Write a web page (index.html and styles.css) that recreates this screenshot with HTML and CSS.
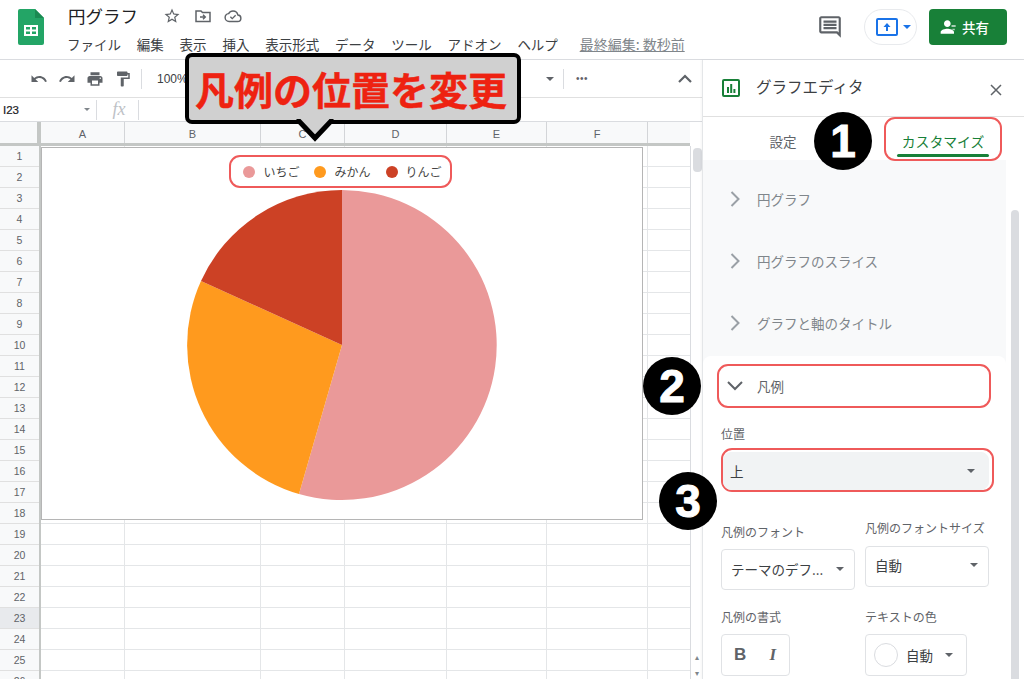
FILE: index.html
```html
<!DOCTYPE html>
<html lang="ja">
<head>
<meta charset="utf-8">
<title>円グラフ</title>
<link rel="stylesheet" href="styles.css">
</head>
<body>
<div class="page">
  <header class="topbar">
    <svg class="logo" viewBox="0 0 26 36" width="26" height="36"><path d="M2 0h15l9 9v25a2 2 0 0 1-2 2H2a2 2 0 0 1-2-2V2a2 2 0 0 1 2-2z" fill="#23a566"/><path d="M17 0l9 9h-9z" fill="#1a8a52"/><path d="M6 16h14v11H6z" fill="#fff"/><path d="M8 18h4v2.500H8zM14 18h4v2.500h-4zM8 22.500h4V25H8zM14 22.500h4V25h-4z" fill="#23a566"/></svg>
    <div class="doc">
      <div class="doc-title">
        <span class="title">円グラフ</span>
        <svg class="ic star" viewBox="0 0 24 24" width="18" height="18"><path fill="#5f6368" d="M22 9.240l-7.190-.620L12 2 9.190 8.630 2 9.240l5.460 4.730L5.820 21 12 17.270 18.180 21l-1.630-7.030L22 9.240zM12 15.400l-3.760 2.270 1-4.280-3.320-2.880 4.380-.380L12 6.100l1.710 4.040 4.380.380-3.320 2.880 1 4.280L12 15.400z"/></svg>
        <svg class="ic" viewBox="0 0 18 18" width="18" height="18"><path d="M2 4h5l1.500 1.500H16V14.500H2z" fill="none" stroke="#5f6368" stroke-width="1.500"/><path d="M6 10h5M9 7.800l2.300 2.200L9 12.200" fill="none" stroke="#5f6368" stroke-width="1.400"/></svg>
        <svg class="ic" viewBox="0 0 24 24" width="18" height="18"><path d="M19.350 10.040C18.670 6.590 15.640 4 12 4 9.110 4 6.600 5.640 5.350 8.040 2.340 8.360 0 10.910 0 14c0 3.310 2.690 6 6 6h13c2.760 0 5-2.240 5-5 0-2.640-2.050-4.780-4.650-4.960z" transform="translate(1.500 1.800) scale(.875)" fill="none" stroke="#5f6368" stroke-width="2.200"/><path d="M8.500 13l2.500 2.500 4.500-4.500" fill="none" stroke="#5f6368" stroke-width="1.800"/></svg>
      </div>
      <nav class="menu">
        <span>ファイル</span><span>編集</span><span>表示</span><span>挿入</span><span>表示形式</span><span>データ</span><span>ツール</span><span>アドオン</span><span>ヘルプ</span>
        <a class="saved">最終編集: 数秒前</a>
      </nav>
    </div>
    <div class="actions">
      <svg class="comment" viewBox="0 0 24 24" width="26" height="26"><path fill="#5f6368" d="M21.990 4c0-1.100-.890-2-1.990-2H4c-1.100 0-2 .900-2 2v12c0 1.100.900 2 2 2h14l4 4-.010-18zM20 4v13.170L18.830 16H4V4h16zM6 12h12v2H6zm0-3h12v2H6zm0-3h12v2H6z"/></svg>
      <div class="present">
        <svg viewBox="0 0 22 18" width="22" height="18"><rect x="1" y="1" width="20" height="16" rx="1" fill="none" stroke="#1a73e8" stroke-width="2"/><path d="M11 5l3.500 4H12v4h-2V9H7.500z" fill="#1a73e8"/></svg>
        <i class="caret blue"></i>
      </div>
      <button class="share">
        <svg viewBox="0 0 24 24" width="20" height="20"><path fill="#fff" d="M10 12c2.210 0 4-1.790 4-4s-1.790-4-4-4-4 1.790-4 4 1.790 4 4 4zm0 2c-2.670 0-8 1.340-8 4v2h16v-2c0-2.660-5.330-4-8-4z"/><path fill="#a8cdb5" d="M15 9.500h5v2.500h-5zM16 14h3v2h-3z"/></svg>
        <span>共有</span>
      </button>
    </div>
  </header>

  <div class="workspace">
    <section class="sheet">
      <div class="toolbar">
        <svg viewBox="0 0 24 24" width="18" height="18"><path fill="#5f6368" d="M12.500 8c-2.650 0-5.050.990-6.900 2.600L2 7v9h9l-3.620-3.620c1.390-1.160 3.160-1.880 5.120-1.880 3.540 0 6.550 2.310 7.600 5.500l2.370-.780C21.080 11.030 17.150 8 12.500 8z"/></svg>
        <svg viewBox="0 0 24 24" width="18" height="18"><path fill="#5f6368" d="M18.400 10.600C16.550 8.990 14.150 8 11.500 8c-4.650 0-8.580 3.030-9.960 7.220L3.900 16c1.050-3.190 4.050-5.500 7.600-5.500 1.950 0 3.730.720 5.120 1.880L13 16h9V7l-3.600 3.600z"/></svg>
        <svg viewBox="0 0 24 24" width="18" height="18"><path fill="#5f6368" d="M19 8H5c-1.660 0-3 1.340-3 3v6h4v4h12v-4h4v-6c0-1.660-1.340-3-3-3zm-3 11H8v-5h8v5zm3-7c-.550 0-1-.450-1-1s.450-1 1-1 1 .450 1 1-.450 1-1 1zm-1-9H6v4h12V3z"/></svg>
        <svg viewBox="0 0 24 24" width="18" height="18"><path fill="#5f6368" d="M18 4V3c0-.550-.450-1-1-1H5c-.550 0-1 .450-1 1v4c0 .550.450 1 1 1h12c.550 0 1-.450 1-1V6h1v4H9v11c0 .550.450 1 1 1h2c.550 0 1-.450 1-1v-9h8V4h-3z"/></svg>
        <i class="sep first"></i>
        <span class="zoom-val">100%</span>
        <div class="tb-right">
          <i class="caret"></i>
          <i class="sep"></i>
          <span class="dots">•••</span>
          <svg class="collapse" viewBox="0 0 14 9" width="14" height="9"><path d="M1 8l6-6 6 6" fill="none" stroke="#5f6368" stroke-width="2.200"/></svg>
        </div>
      </div>
      <div class="formula">
        <span class="cellref">I23</span>
        <i class="caret small"></i>
        <i class="sep"></i>
        <span class="fx">fx</span>
        <i class="sep"></i>
      </div>
      <div class="grid-head">
        <div class="corner"></div>
        <div class="col a">A</div><div class="col b">B</div><div class="col c">C</div><div class="col d">D</div><div class="col e">E</div><div class="col f">F</div><div class="col g"></div>
      </div>
      <div class="grid-body">
        <div class="rownums">
          <div>1</div><div>2</div><div>3</div><div>4</div><div>5</div><div>6</div><div>7</div><div>8</div><div>9</div><div>10</div><div>11</div><div>12</div><div>13</div><div>14</div><div>15</div><div>16</div><div>17</div><div>18</div><div>19</div><div>20</div><div>21</div><div>22</div><div class="on">23</div><div>24</div><div>25</div><div>26</div>
        </div>
        <div class="cells">
          <div class="a"></div><div class="b"></div><div class="c"></div><div class="d"></div><div class="e"></div><div class="f"></div><div class="g"></div>
          <div class="chart">
            <div class="legend">
              <span class="key"><i class="dot pink"></i>いちご</span>
              <span class="key"><i class="dot orange"></i>みかん</span>
              <span class="key"><i class="dot red"></i>りんご</span>
            </div>
            <svg class="pie" viewBox="0 0 312 312" width="312" height="312">
              <path d="M156 156L156 1A155 155 0 1 1 113 305Z" fill="#ea9999"/>
              <path d="M156 156L113 305A155 155 0 0 1 15 92Z" fill="#ff9a1e"/>
              <path d="M156 156L15 92A155 155 0 0 1 156 1Z" fill="#cc4125"/>
            </svg>
          </div>
        </div>
        <div class="vscroll"><i class="thumb"></i><span class="arrows">▴<br>▾</span></div>
      </div>
    </section>

    <aside class="panel">
      <div class="panel-head">
        <svg viewBox="0 0 18 18" width="18" height="18"><rect x="1" y="1" width="16" height="16" rx="1" fill="none" stroke="#188038" stroke-width="2"/><path d="M5 8h2v6H5zM8.200 5h2v9h-2zM11.400 10h2v4h-2z" fill="#188038"/></svg>
        <span class="panel-title">グラフエディタ</span>
        <svg class="close" viewBox="0 0 12 12" width="12" height="12"><path d="M1 1l10 10M11 1L1 11" stroke="#5f6368" stroke-width="1.500" fill="none"/></svg>
      </div>
      <div class="tabs">
        <span class="tab">設定</span>
        <span class="tab active">カスタマイズ<i></i></span>
      </div>
      <div class="accordion">
        <div class="acc-row"><svg viewBox="0 0 10 16" width="10" height="16"><path d="M1.500 1l7 7-7 7" fill="none" stroke="#9aa0a6" stroke-width="2"/></svg><span>円グラフ</span></div>
        <div class="acc-row"><svg viewBox="0 0 10 16" width="10" height="16"><path d="M1.500 1l7 7-7 7" fill="none" stroke="#9aa0a6" stroke-width="2"/></svg><span>円グラフのスライス</span></div>
        <div class="acc-row"><svg viewBox="0 0 10 16" width="10" height="16"><path d="M1.500 1l7 7-7 7" fill="none" stroke="#9aa0a6" stroke-width="2"/></svg><span>グラフと軸のタイトル</span></div>
        <div class="card">
          <div class="card-head"><svg viewBox="0 0 16 10" width="16" height="10"><path d="M1 1l7 7 7-7" fill="none" stroke="#5f6368" stroke-width="2"/></svg><span>凡例</span></div>
          <div class="form">
            <label class="lbl pos">位置</label>
            <div class="hl"><div class="select filled"><span>上</span><i class="caret"></i></div></div>
            <div class="two font-row">
              <div class="fcol shifted">
                <label class="lbl">凡例のフォント</label>
                <div class="select font"><span>テーマのデフ...</span><i class="caret"></i></div>
              </div>
              <div class="fcol">
                <label class="lbl">凡例のフォントサイズ</label>
                <div class="select size"><span>自動</span><i class="caret"></i></div>
              </div>
            </div>
            <div class="two style-row">
              <div class="fcol">
                <label class="lbl">凡例の書式</label>
                <div class="select fmt"><b>B</b><em>I</em></div>
              </div>
              <div class="fcol">
                <label class="lbl">テキストの色</label>
                <div class="select color"><i class="swatch"></i><span>自動</span><i class="caret"></i></div>
              </div>
            </div>
          </div>
        </div>
      </div>
      <i class="panel-scroll"></i>
    </aside>
  </div>

  <div class="callout">
    <span>凡例の位置を変更</span>
    <svg class="tail" viewBox="0 0 40 24" width="40" height="24"><path d="M2 0L20 19 38 0" fill="#d0d0d0" stroke="#000" stroke-width="5" stroke-linejoin="miter"/></svg>
  </div>
  <span class="badge one">1</span>
  <span class="badge two-b">2</span>
  <span class="badge three">3</span>
</div>
</body>
</html>
```

FILE: styles.css
```css
* { box-sizing: border-box; }
html, body { margin: 0; padding: 0; background: #fff; }
body { font-family: "Noto Sans CJK JP", "Liberation Sans", sans-serif; color: #3c4043; }
i, em { font-style: normal; }
svg { display: block; flex: none; }
.page { position: relative; width: 1024px; height: 679px; overflow: hidden; }

/* top bar */
.topbar { height: 60px; display: flex; padding-left: 18px; border-bottom: 1px solid #dadce0; }
.logo { margin-top: 9px; }
.doc { margin-left: 24px; padding-top: 1px; }
.doc-title { display: flex; align-items: center; height: 30px; }
.title { font-size: 17.500px; color: #202124; width: 95px; line-height: 26px; }
.doc-title .ic { margin-right: 12.500px; }
.menu { display: flex; align-items: center; gap: 15.800px; margin-left: -1px; font-size: 13.500px; color: #3c4043; height: 26px; white-space: nowrap; }
.saved { margin-left: 6px; font-size: 14px; color: #80868b; text-decoration: underline; }
.actions { margin-left: auto; display: flex; align-items: center; padding-right: 17px; height: 54px; }
.comment { margin-right: 21px; }
.present { width: 53px; height: 36px; border: 1px solid #e8eaed; border-radius: 18px; display: flex; align-items: center; padding-left: 11px; gap: 5px; margin-right: 12px; }
.share { width: 78px; height: 36px; border: 0; border-radius: 4px; background: #188038; color: #fff; font: 500 13.500px "Noto Sans CJK JP", sans-serif; display: flex; align-items: center; justify-content: center; gap: 3px; padding: 0 8px 0 0; }

.caret { display: block; flex: none; width: 0; height: 0; border-left: 4.500px solid transparent; border-right: 4.500px solid transparent; border-top: 4.500px solid #5f6368; }
.caret.blue { border-top-color: #1a73e8; }
.caret.small { border-left-width: 3.500px; border-right-width: 3.500px; border-top-width: 3.500px; border-top-color: #80868b; }
.sep { display: block; width: 1px; height: 20px; background: #dadce0; flex: none; }

/* workspace */
.workspace { display: flex; height: 619px; }
.sheet { width: 702px; flex: none; }
.toolbar { height: 38px; display: flex; align-items: center; gap: 10px; padding-left: 30px; border-bottom: 1px solid #e0e0e0; }
.sep.first { margin-left: -1px; }
.zoom-val { margin-left: 5px; font: 12px "Liberation Sans", sans-serif; color: #3c4043; }
.tb-right { margin-left: auto; display: flex; align-items: center; gap: 9px; padding-right: 10px; }
.dots { font: 10px "Liberation Sans", sans-serif; letter-spacing: .5px; color: #5f6368; margin-left: 3px; margin-right: 81px; }
.formula { height: 24px; display: flex; align-items: center; border-bottom: 1px solid #dadce0; padding-left: 3px; }
.cellref { font: 11.500px "Liberation Sans", sans-serif; color: #202124; width: 81px; -webkit-text-stroke: .2px #202124; }
.formula .sep { margin-left: 6px; }
.fx { font: italic 18px "Liberation Serif", serif; color: #bdc1c6; width: 40px; text-align: center; margin-left: 2px; margin-right: -7px; }

.grid-head { height: 24px; display: flex; background: #f8f9fa; border-bottom: 3px solid #c4c7c5; width: 690px; }
.corner { width: 41px; border-right: 4px solid #c4c7c5; }
.col { display: flex; align-items: center; justify-content: center; padding-top: 2px; font: 11px "Liberation Sans", sans-serif; color: #5f6368; border-right: 1px solid #d3d5d8; }
.a { width: 84px; } .b { width: 136px; } .c { width: 84px; } .d { width: 102px; } .e { width: 100px; } .f { width: 101px; } .g { width: 42px; }
.col.g { border-right: 0; }
.grid-body { display: flex; height: 533px; overflow: hidden; position: relative; }
.rownums { width: 41px; flex: none; border-right: 2px solid #c4c7c5; background: #f8f9fa; }
.rownums div { height: 21px; border-bottom: 1px solid #e0e0e0; text-align: center; font: 10.500px/20px "Liberation Sans", sans-serif; color: #5f6368; }
.rownums .on { background: #e8eaed; }
.cells { width: 649px; flex: none; position: relative; display: flex; background: repeating-linear-gradient(to bottom, #fff 0, #fff 20px, #e4e6e8 20px, #e4e6e8 21px); }
.cells > div { border-right: 1px solid #e4e6e8; }
.cells > .g { border-right: 0; }
.vscroll { flex: 1; border-left: 1px solid #dadce0; position: relative; }
.thumb { position: absolute; left: 2px; top: 2px; width: 9px; height: 24px; border-radius: 4px; background: #dadce0; }
.arrows { position: absolute; left: 0; right: 0; top: 504px; text-align: center; font: 8px/16px "Liberation Sans", sans-serif; color: #80868b; }

/* chart (floats over the cells) */
.cells > .chart { position: absolute; left: 0; top: 1px; width: 602px; height: 373px; background: #fff; border: 1px solid #b5b5b5; display: flex; flex-direction: column; align-items: center; }
.legend { width: 223px; height: 33px; margin: 7px 3px 0 0; padding-left: 4px; border: 2px solid #ef5a5a; border-radius: 11px; display: flex; align-items: center; justify-content: center; gap: 15px; font-size: 12px; color: #444; flex: none; }
.key { display: flex; align-items: center; gap: 8px; }
.dot { width: 12px; height: 12px; border-radius: 50%; }
.pink { background: #ea9999; } .orange { background: #ff9a1e; } .red { background: #cc4125; }
.pie { margin-top: 1px; }

/* panel */
.panel { width: 322px; flex: none; border-left: 1px solid #e4e6e8; position: relative; box-shadow: -1px 0 2px rgba(0,0,0,.04); background: #fff; }
.panel-head { height: 57px; display: flex; align-items: center; padding: 0 22px 0 19px; border-bottom: 1px solid #e0e0e0; }
.panel-title { margin-left: 16px; font-size: 15.500px; color: #3c4043; margin-top: -4px; }
.close { margin-left: auto; margin-top: 3px; }
.tabs { height: 43px; display: flex; }
.tab { width: 160px; display: flex; align-items: center; justify-content: center; font-size: 13.500px; color: #5f6368; padding-top: 4px; }
.tab.active { width: 118px; height: 44px; margin-left: 21px; position: relative; z-index: 1; border: 2px solid #ef5a5a; border-radius: 11px; color: #188038; font-size: 13.800px; }
.tab.active i { position: absolute; left: 11px; right: 11px; bottom: 2px; height: 3px; border-radius: 2px; background: #188038; }
.accordion { width: 303px; background: #f8f9fa; padding-top: 8px; height: 520px; }
.acc-row { height: 62px; display: flex; align-items: center; padding-left: 27px; font-size: 13.500px; color: #80868b; }
.acc-row span { margin-left: 17px; }
.card { background: #fff; border-radius: 8px 8px 0 0; margin-top: 2px; padding: 8px 15px 0 14px; height: 330px; }
.card-head { height: 44px; border: 2px solid #ef5a5a; border-radius: 11px; display: flex; align-items: center; padding-left: 8px; font-size: 13.500px; color: #5f6368; }
.card-head span { margin-left: 14px; }
.form { margin-left: 4px; }
.lbl { display: block; font-size: 12px; line-height: 16px; color: #5f6368; white-space: nowrap; }
.lbl.pos { margin-top: 18px; }
.hl { width: 273px; height: 44px; margin-top: 6px; border: 2px solid #ef5a5a; border-radius: 11px; padding: 2px 3px 0 0; }
.select { height: 41px; border: 1px solid #e0e2e5; border-radius: 4px; display: flex; align-items: center; padding: 0 10px 0 9px; font-size: 13.500px; color: #3c4043; justify-content: space-between; }
.select.filled { height: 38px; background: #f1f3f4; border-color: #f1f3f4; border-radius: 8px; padding: 0 13px 0 6px; }
.two { display: grid; grid-template-columns: 144px 124px; }
.font-row { margin-top: 28px; }
.style-row { margin-top: 19px; }
.fcol.shifted { padding-top: 4px; }
.fcol .select { margin-top: 9px; }
.select.font { width: 134px; padding-bottom: 1px; }
.select.size { width: 124px; margin-top: 10px; padding-bottom: 3px; }
.select.fmt { width: 69px; height: 42px; padding: 0 13px 0 12px; }
.select.fmt b { font: bold 17px "Liberation Sans", sans-serif; color: #5f6368; }
.select.fmt em { font: italic bold 17px "Liberation Serif", serif; color: #5f6368; }
.select.color { width: 102px; height: 42px; padding: 0 13px 1px 8px; }
.swatch { width: 24px; height: 24px; border-radius: 50%; border: 1px solid #dadce0; }
.select.color span { margin-left: -4px; }
.panel-scroll { position: absolute; left: 308px; top: 150px; width: 8px; height: 480px; border-radius: 4px 4px 0 0; background: #dadce0; }

/* annotations */
.callout { position: absolute; left: 185px; top: 53px; width: 336px; height: 71px; padding-right: 4px; background: #d0d0d0; border: 4px solid #000; border-radius: 7px; display: flex; align-items: center; justify-content: center; color: #ee2211; font-size: 39px; font-weight: 700; line-height: 1; white-space: nowrap; -webkit-text-stroke: .4px #ee2211; }
.tail { position: absolute; left: 106px; top: 62px; }
.badge { position: absolute; width: 58px; height: 58px; border-radius: 50%; background: #000; color: #fff; font: bold 46px/58px "Liberation Sans", sans-serif; text-align: center; -webkit-text-stroke: 1px #fff; }
.badge.one { left: 814px; top: 112px; }
.badge.two-b { left: 643px; top: 357px; }
.badge.three { left: 659px; top: 472px; }
```
